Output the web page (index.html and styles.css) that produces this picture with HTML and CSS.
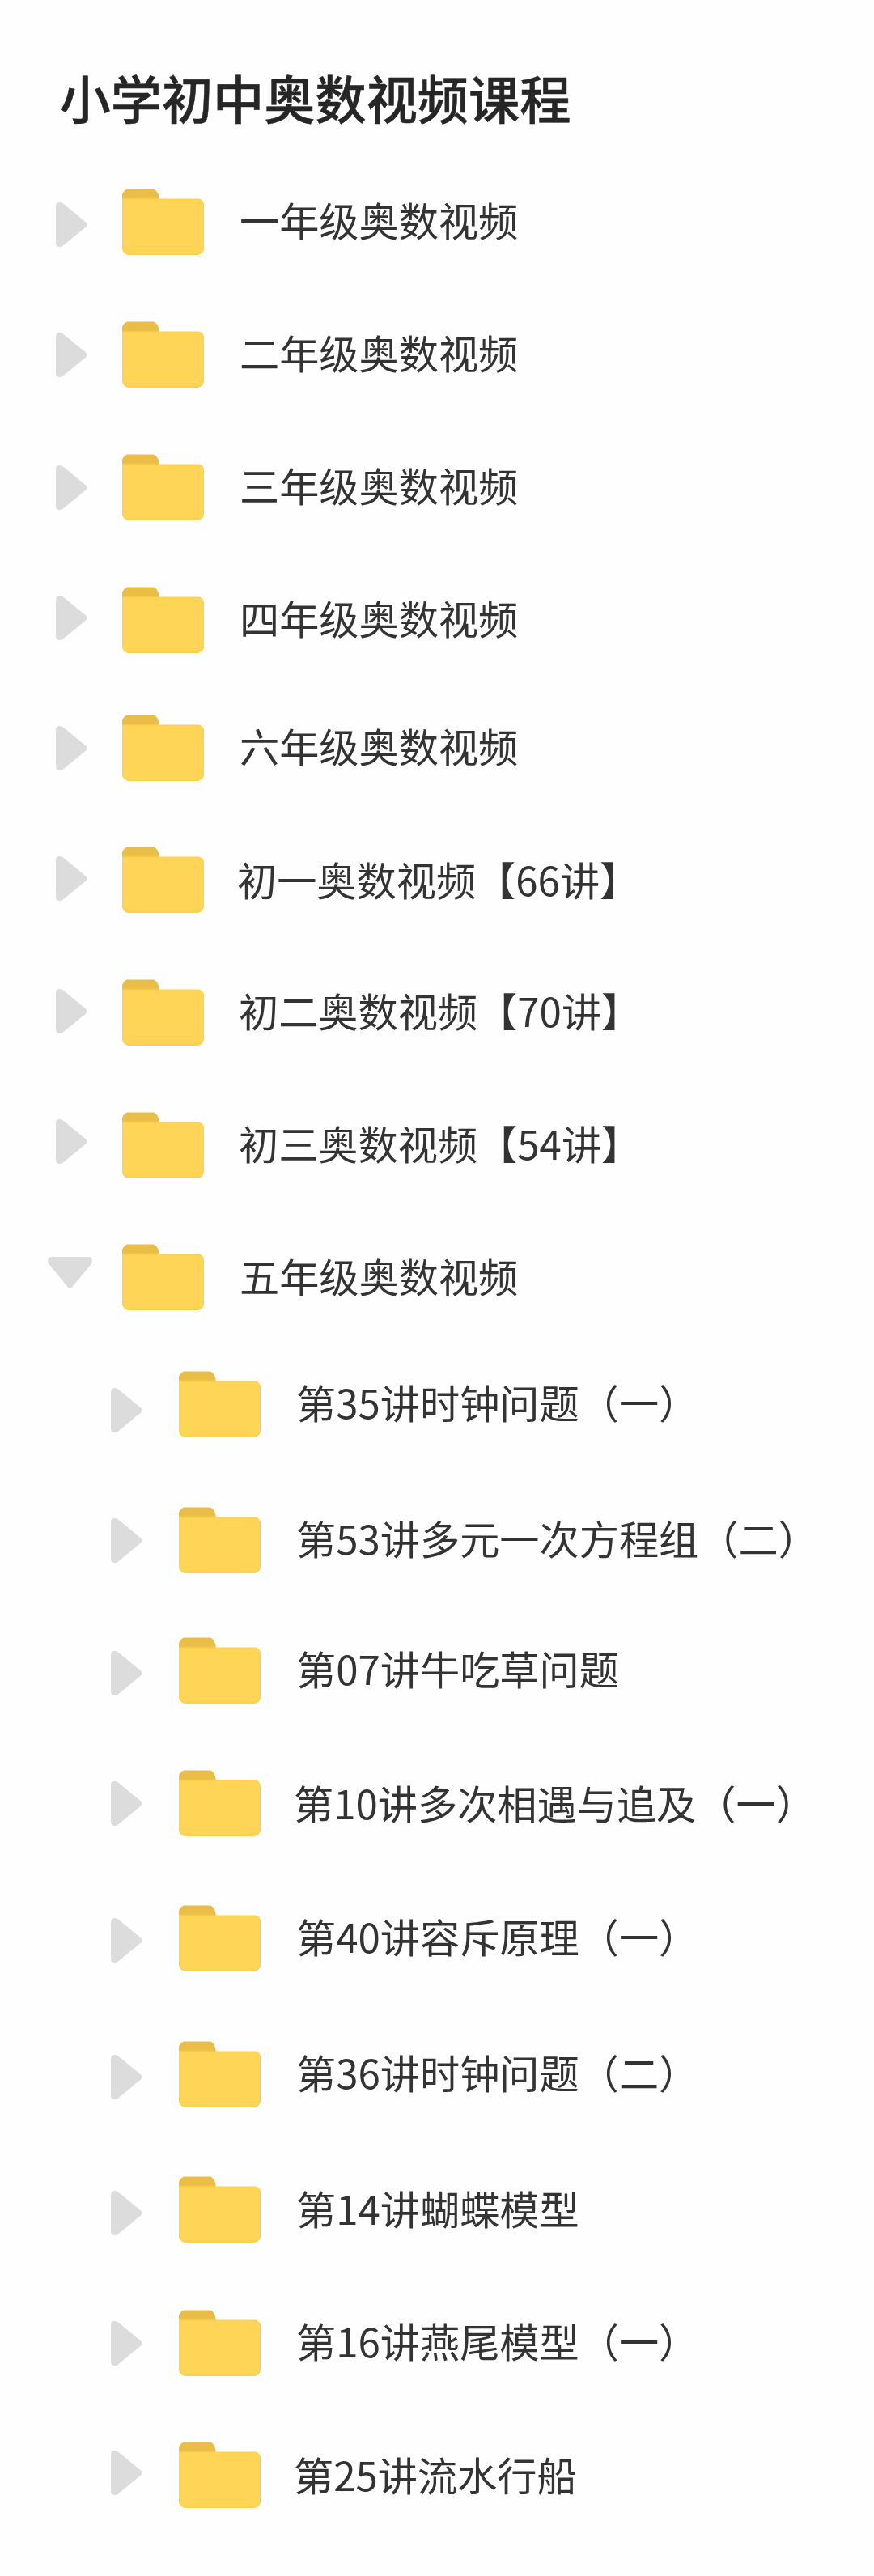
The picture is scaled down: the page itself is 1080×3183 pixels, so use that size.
FILE: index.html
```html
<!DOCTYPE html>
<html lang="zh-CN">
<head>
<meta charset="utf-8">
<title>小学初中奥数视频课程</title>
<link rel="stylesheet" href="styles.css">
</head>
<body>
<svg class="defs" width="0" height="0" aria-hidden="true">
  <defs>
    <linearGradient id="tab" x1="0" y1="0" x2="0" y2="1">
      <stop offset="0" stop-color="#e9be48"/>
      <stop offset=".7" stop-color="#e9bd46"/>
      <stop offset="1" stop-color="#f3c84e"/>
    </linearGradient>
    <symbol id="folder" viewBox="0 0 101 82">
      <path fill="url(#tab)" d="M0 14V7Q2 2 6 .5H39Q43 2 45 8L46 14Z"/>
      <path fill="#ffd04c" d="M0 12.5H95Q100 14 101 19V75Q100 80 94 82H7Q1 80 0 75Z"/>
      <path fill="#ffd558" d="M1.500 14H94Q99 14.500 99.500 19V75Q98 79 94 79.500H7Q2 78 1.500 75Z"/>
    </symbol>
    <symbol id="arrow" viewBox="0 0 39 55">
      <path fill="#dcdcdc" d="M0 5Q0 0 5 0Q7 0 9 1.500L37 24.500Q40 27.500 37 30.500L9 53.500Q7 55 5 55Q0 55 0 50Z"/>
    </symbol>
    <symbol id="arrow-down" viewBox="0 0 55 39">
      <path fill="#dcdcdc" d="M5 0H50Q55 0 55 5Q55 7 53.500 9L30.500 37Q27.500 40 24.500 37L1.500 9Q0 7 0 5Q0 0 5 0Z"/>
    </symbol>
  </defs>
</svg>
<main class="page">
  <h1 class="title">小学初中奥数视频课程</h1>
  <ul class="tree">
    <li class="row grade"><svg class="arrow"><use href="#arrow"/></svg><svg class="folder"><use href="#folder"/></svg><span class="label">一年级奥数视频</span></li>
    <li class="row grade"><svg class="arrow"><use href="#arrow"/></svg><svg class="folder"><use href="#folder"/></svg><span class="label">二年级奥数视频</span></li>
    <li class="row grade"><svg class="arrow"><use href="#arrow"/></svg><svg class="folder"><use href="#folder"/></svg><span class="label">三年级奥数视频</span></li>
    <li class="row grade"><svg class="arrow"><use href="#arrow"/></svg><svg class="folder"><use href="#folder"/></svg><span class="label">四年级奥数视频</span></li>
    <li class="row grade"><svg class="arrow"><use href="#arrow"/></svg><svg class="folder"><use href="#folder"/></svg><span class="label">六年级奥数视频</span></li>
    <li class="row"><svg class="arrow"><use href="#arrow"/></svg><svg class="folder"><use href="#folder"/></svg><span class="label">初一奥数视频【66讲】</span></li>
    <li class="row"><svg class="arrow"><use href="#arrow"/></svg><svg class="folder"><use href="#folder"/></svg><span class="label">初二奥数视频【70讲】</span></li>
    <li class="row"><svg class="arrow"><use href="#arrow"/></svg><svg class="folder"><use href="#folder"/></svg><span class="label">初三奥数视频【54讲】</span></li>
    <li class="row grade open"><svg class="arrow"><use href="#arrow-down"/></svg><svg class="folder"><use href="#folder"/></svg><span class="label">五年级奥数视频</span></li>
    <li class="row child"><svg class="arrow"><use href="#arrow"/></svg><svg class="folder"><use href="#folder"/></svg><span class="label">第35讲时钟问题（一）</span></li>
    <li class="row child"><svg class="arrow"><use href="#arrow"/></svg><svg class="folder"><use href="#folder"/></svg><span class="label">第53讲多元一次方程组（二）</span></li>
    <li class="row child"><svg class="arrow"><use href="#arrow"/></svg><svg class="folder"><use href="#folder"/></svg><span class="label">第07讲牛吃草问题</span></li>
    <li class="row child"><svg class="arrow"><use href="#arrow"/></svg><svg class="folder"><use href="#folder"/></svg><span class="label">第10讲多次相遇与追及（一）</span></li>
    <li class="row child"><svg class="arrow"><use href="#arrow"/></svg><svg class="folder"><use href="#folder"/></svg><span class="label">第40讲容斥原理（一）</span></li>
    <li class="row child"><svg class="arrow"><use href="#arrow"/></svg><svg class="folder"><use href="#folder"/></svg><span class="label">第36讲时钟问题（二）</span></li>
    <li class="row child"><svg class="arrow"><use href="#arrow"/></svg><svg class="folder"><use href="#folder"/></svg><span class="label">第14讲蝴蝶模型</span></li>
    <li class="row child"><svg class="arrow"><use href="#arrow"/></svg><svg class="folder"><use href="#folder"/></svg><span class="label">第16讲燕尾模型（一）</span></li>
    <li class="row child"><svg class="arrow"><use href="#arrow"/></svg><svg class="folder"><use href="#folder"/></svg><span class="label">第25讲流水行船</span></li>
  </ul>
</main>
</body>
</html>
```
FILE: styles.css
```css
* { box-sizing: border-box; }

body {
  margin: 0;
  background: #fefefe;
  color: #333;
  font-family: "Noto Sans CJK SC", sans-serif;
}

.defs { display: block; }

.page {
  width: 1080px;
  height: 3183px;
  padding-top: 88px;
  overflow: hidden;
}

.title {
  margin: 0 0 81px 73.5px;
  font-size: 63.2px;
  line-height: 64px;
  font-weight: 500;
  color: #262626;
  -webkit-text-stroke: .5px #262626;
}

.tree {
  margin: 0;
  padding: 0;
  list-style: none;
}

.row {
  --arrow-top: 14px;
  --label-top: 13px;
  --space: 82px;
  display: flex;
  align-items: flex-start;
  height: 82px;
  margin-bottom: var(--space);
  padding-left: 69px;
}

.arrow {
  flex: none;
  width: 39px;
  height: 55px;
  margin-top: var(--arrow-top);
}

.folder {
  flex: none;
  width: 101px;
  height: 82px;
  margin-left: 43px;
}

.label {
  margin: var(--label-top) 0 0 43px;
  font-size: 49.2px;
  line-height: 50px;
  white-space: nowrap;
}

.grade .label { margin-left: 44px; }

.row.open { padding-left: 59px; }
.open .arrow { width: 55px; height: 39px; }
.open .folder { margin-left: 37px; }

.row.child { padding-left: 137px; }
.child .folder { margin-left: 45px; }
.child .label { margin-left: 44px; }

.row:nth-child(1) { --arrow-top: 17px; }
.row:nth-child(4) { --arrow-top: 11px; --space: 76px; }
.row:nth-child(5) { --space: 81px; }
.row:nth-child(6) { --arrow-top: 12px; --label-top: 15px; }
.row:nth-child(6) .label { margin-left: 41px; }
.row:nth-child(7) { --arrow-top: 12px; }
.row:nth-child(8) { --arrow-top: 9px; --space: 81px; }
.row:nth-child(9) { --arrow-top: 16px; --label-top: 14px; --space: 75px; }
.row:nth-child(10) { --arrow-top: 21px; --space: 86px; }
.row:nth-child(11) { --space: 79px; }
.row:nth-child(12) { --arrow-top: 17px; }
.row:nth-child(13) { --label-top: 15px; --space: 85px; }
.row:nth-child(13) .label { margin-left: 41px; }
.row:nth-child(14) { --arrow-top: 16px; --space: 86px; }
.row:nth-child(15) { --arrow-top: 17px; --space: 85px; }
.row:nth-child(16) { --arrow-top: 18px; --label-top: 14px; --space: 83px; }
.row:nth-child(17) { --space: 81px; }
.row:nth-child(18) { --arrow-top: 11px; --label-top: 15px; --space: 0; }
.row:nth-child(18) .label { margin-left: 41px; }
```
